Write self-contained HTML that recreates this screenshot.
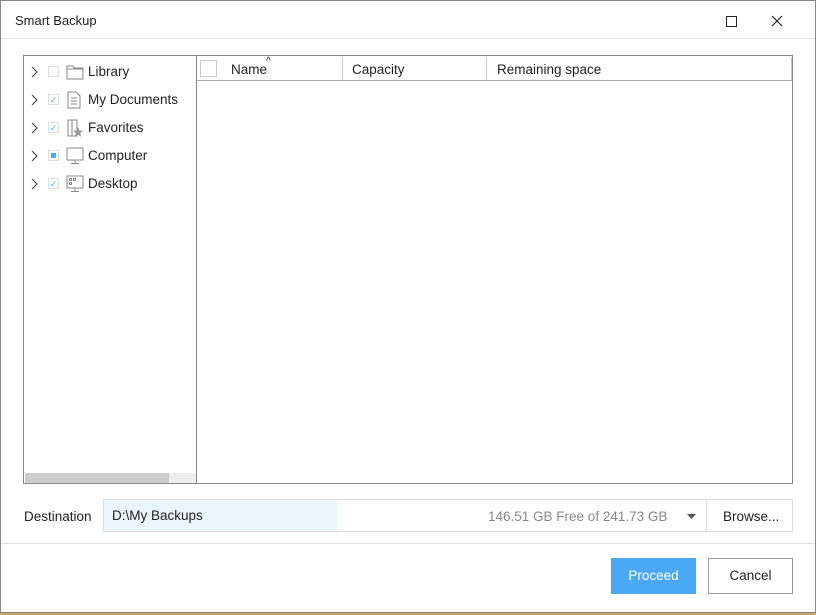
<!DOCTYPE html><html><head><style>
body{margin:0;width:816px;height:615px;background:#c8a060;font-family:"Liberation Sans",sans-serif;font-size:13.5px;color:#222;position:relative;overflow:hidden}
.win{position:absolute;left:0;top:0;width:814px;height:611px;background:#fff;border:1px solid #8a8a8a}
.a{position:absolute}
.row{position:absolute;left:0;height:28px;line-height:28px;width:170px}
.cb{position:absolute;left:24px;top:8px;width:11px;height:11px;border:1px solid #ddd;box-sizing:border-box;color:#4aa8f5;font-size:9px;line-height:10px;text-align:center}
.lbl{position:absolute;left:64px}
.hd{position:absolute;top:0;height:23px;line-height:26px;border-right:1px solid #ccc}
</style></head><body><div class="win">
<div class="a" style="left:14px;top:12px;font-size:13px">Smart Backup</div>
<div class="a" style="left:725px;top:15px;width:9px;height:9px;border:1px solid #222"></div>
<svg class="a" style="left:770px;top:14px" width="12" height="12"><path d="M1 1L11 11M11 1L1 11" stroke="#222" stroke-width="1.2"/></svg>
<div class="a" style="left:0;top:37px;width:814px;height:1px;background:#e2e2e2"></div>
<div class="a" style="left:22px;top:54px;width:768px;height:427px;border:1px solid #888"></div>
<div class="a" style="left:195px;top:55px;width:1px;height:427px;background:#888"></div>
<div class="a" style="left:23px;top:56px;width:172px;height:426px">
<div class="row" style="top:1px"><svg class="a" style="left:7px;top:8px" width="8" height="12"><path d="M1 1l5 5-5 5" stroke="#333" fill="none"/></svg><div class="cb"></div><svg class="a" style="left:42px;top:6px" width="18" height="16"><path d="M1 2h6l1 2h9v11H1z M1 5h16" stroke="#888" fill="none"/></svg><span class="lbl">Library</span></div>
<div class="row" style="top:29px"><svg class="a" style="left:7px;top:8px" width="8" height="12"><path d="M1 1l5 5-5 5" stroke="#333" fill="none"/></svg><div class="cb">✓</div><svg class="a" style="left:43px;top:5px" width="14" height="18"><path d="M1 1h8l4 4v12H1z M4 7h6M4 10h6M4 13h6" stroke="#888" fill="none"/></svg><span class="lbl">My Documents</span></div>
<div class="row" style="top:57px"><svg class="a" style="left:7px;top:8px" width="8" height="12"><path d="M1 1l5 5-5 5" stroke="#333" fill="none"/></svg><div class="cb">✓</div><svg class="a" style="left:43px;top:5px" width="16" height="18"><path d="M1 1h9v16H1z M5 1v16" stroke="#888" fill="none"/><path d="M11 8l1.5 3.5 3.5.3-2.7 2.3.8 3.6-3.1-2-3.1 2 .8-3.6L6 11.8l3.5-.3z" fill="#999"/></svg><span class="lbl">Favorites</span></div>
<div class="row" style="top:85px"><svg class="a" style="left:7px;top:8px" width="8" height="12"><path d="M1 1l5 5-5 5" stroke="#333" fill="none"/></svg><div class="cb"><div style="margin:2px;width:5px;height:5px;background:#4aa8f5"></div></div><svg class="a" style="left:42px;top:5px" width="18" height="18"><path d="M1 1h16v12H1z M9 13v3M5 16.5h8" stroke="#888" fill="none"/></svg><span class="lbl">Computer</span></div>
<div class="row" style="top:113px"><svg class="a" style="left:7px;top:8px" width="8" height="12"><path d="M1 1l5 5-5 5" stroke="#333" fill="none"/></svg><div class="cb">✓</div><svg class="a" style="left:42px;top:5px" width="18" height="18"><path d="M1 1h16v12H1z M9 13v3M5 16.5h8 M3.5 3.5h2v2h-2z M7.5 3.5h2v2h-2z M3.5 7.5h2v2h-2z" stroke="#888" fill="none"/></svg><span class="lbl">Desktop</span></div>
<div class="a" style="left:1px;top:416px;width:144px;height:10px;background:#ccc"></div>
<div class="a" style="left:145px;top:416px;width:27px;height:10px;background:#eee"></div>
</div>
<div class="a" style="left:196px;top:56px;width:595px;height:23px;border-bottom:1px solid #aaa">
<div class="hd" style="left:0;width:145px"><div class="a" style="left:3px;top:3px;width:17px;height:17px;border:1px solid #ccc;box-sizing:border-box"></div><span class="a" style="left:34px;top:0">Name</span><span class="a" style="left:69px;top:-8px;font-size:10px">^</span></div>
<div class="hd" style="left:145px;width:144px"><span style="padding-left:10px">Capacity</span></div>
<div class="hd" style="left:290px;width:304px"><span style="padding-left:10px">Remaining space</span></div>
</div>
<div class="a" style="left:23px;top:508px">Destination</div>
<div class="a" style="left:102px;top:498px;width:688px;height:31px;border:1px solid #ddd"></div>
<div class="a" style="left:103px;top:499px;width:233px;height:31px;background:#eaf5fc;line-height:31px"><span style="padding-left:8px">D:\My Backups</span></div>
<div class="a" style="left:487px;top:508px;color:#888">146.51 GB Free of 241.73 GB</div>
<svg class="a" style="left:686px;top:513px" width="9" height="6"><path d="M0 0h9L4.5 5z" fill="#555"/></svg>
<div class="a" style="left:705px;top:499px;width:1px;height:31px;background:#ddd"></div>
<div class="a" style="left:722px;top:508px">Browse...</div>
<div class="a" style="left:0;top:542px;width:814px;height:1px;background:#e2e2e2"></div>
<div class="a" style="left:610px;top:557px;width:85px;height:36px;background:#4aa8f5;color:#fff;line-height:36px;text-align:center">Proceed</div>
<div class="a" style="left:707px;top:557px;width:83px;height:34px;border:1px solid #999;line-height:34px;text-align:center">Cancel</div>
</div></body></html>
